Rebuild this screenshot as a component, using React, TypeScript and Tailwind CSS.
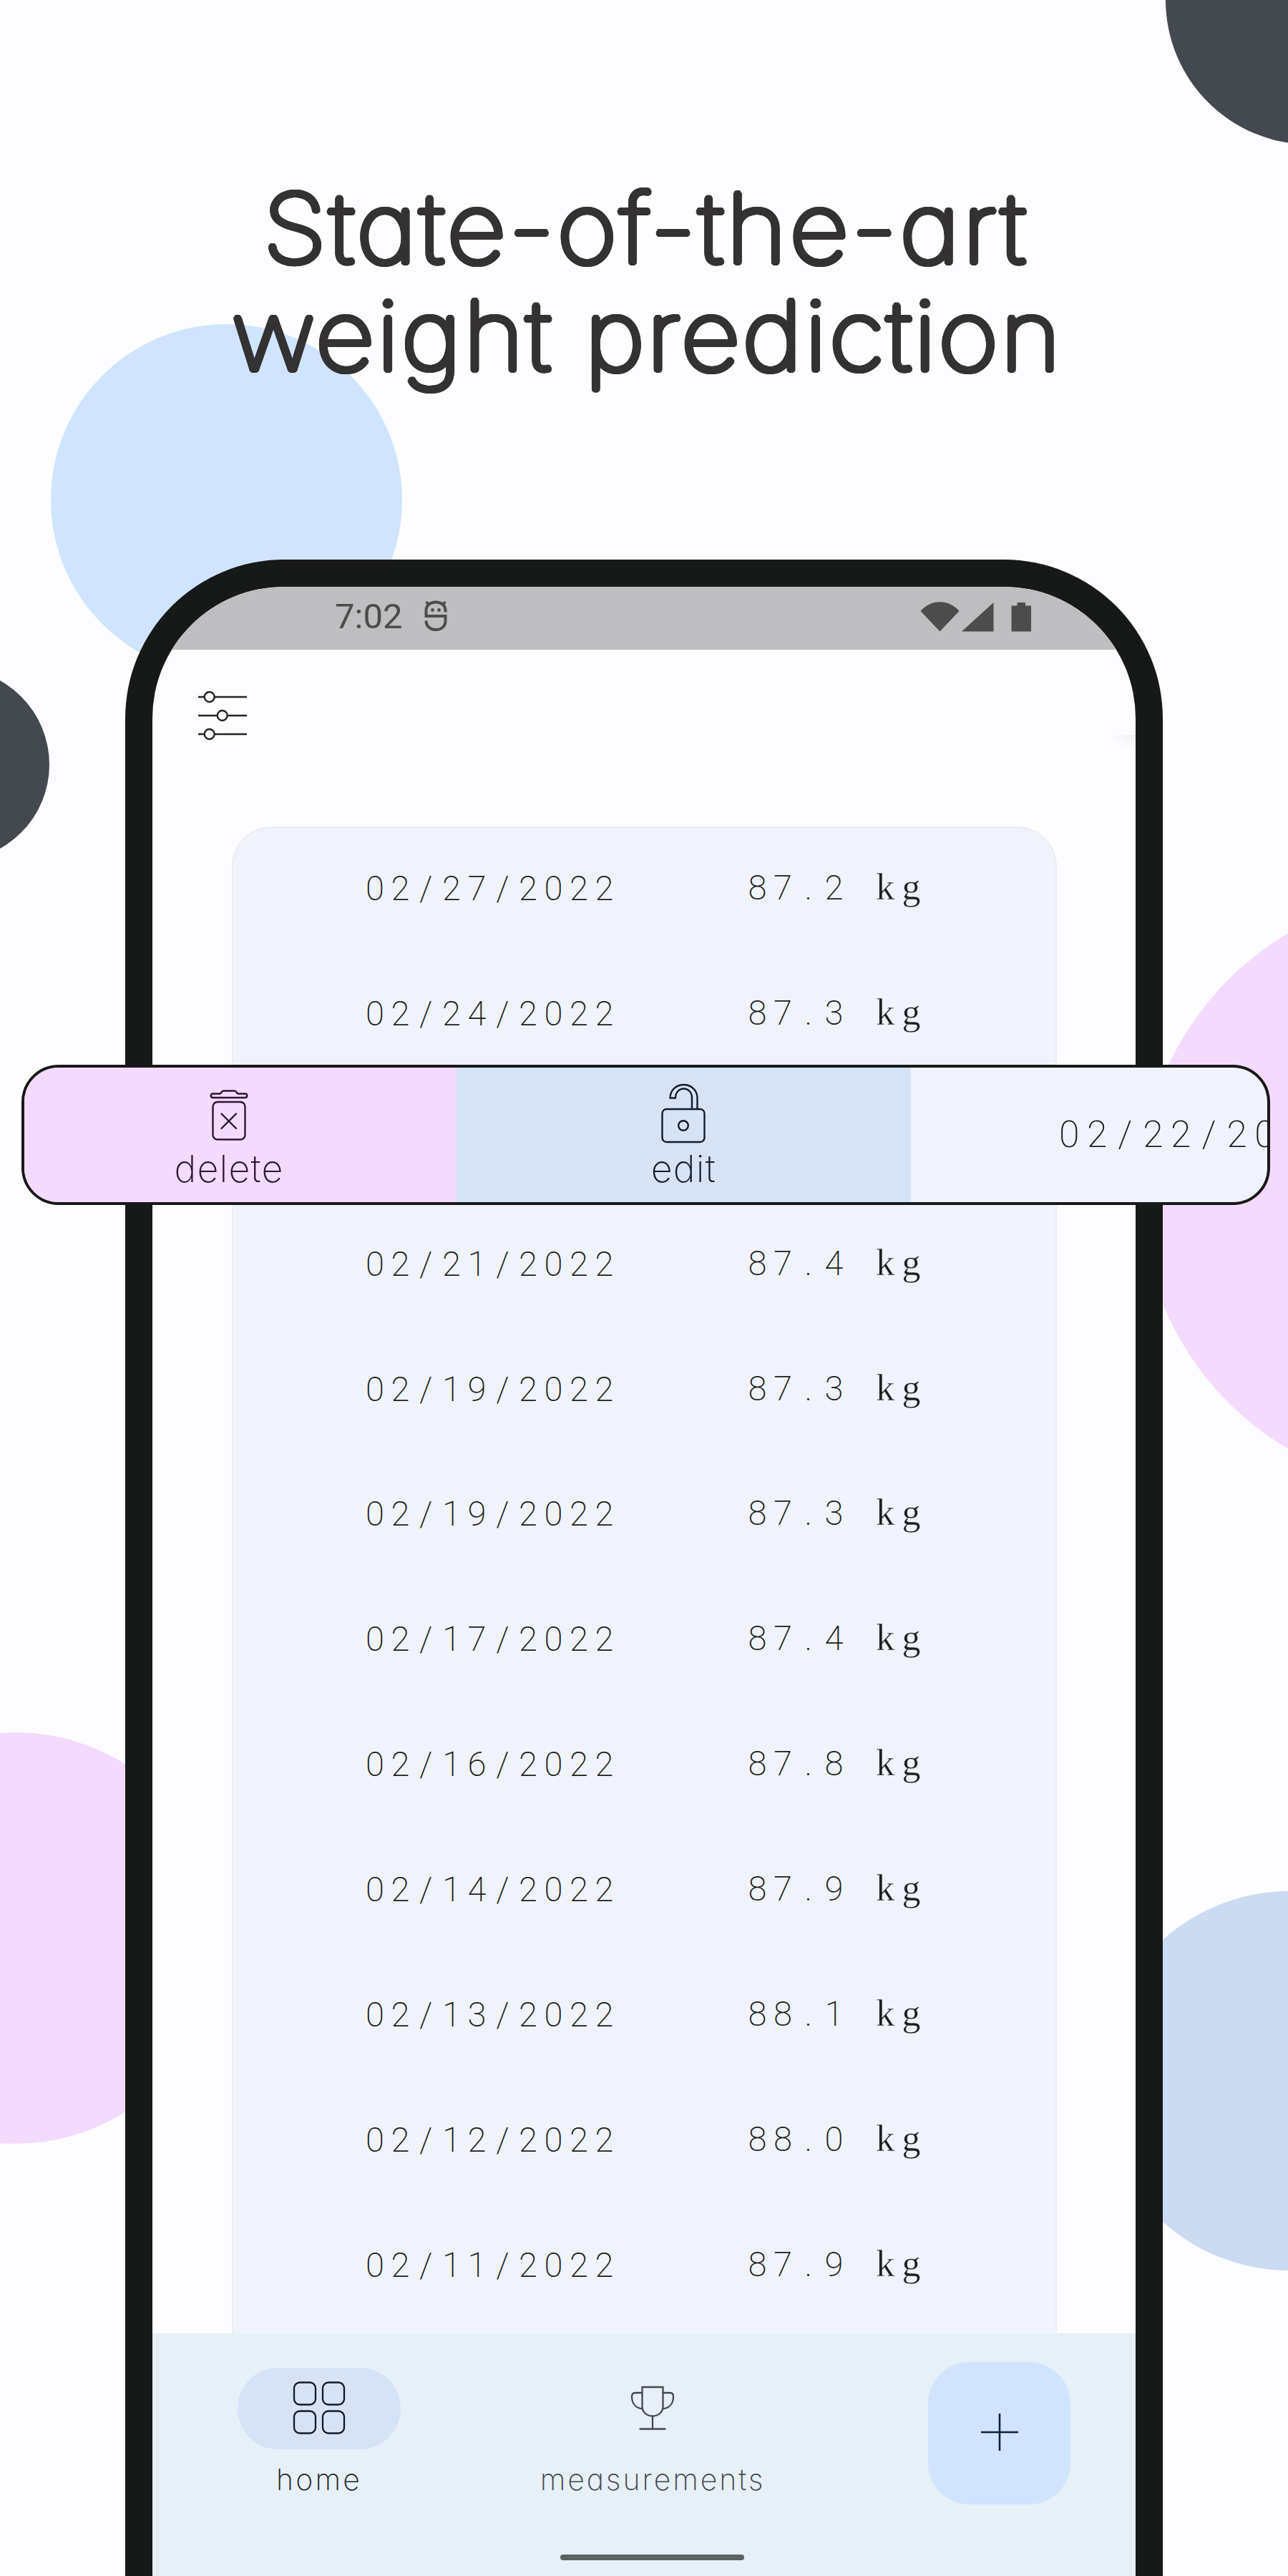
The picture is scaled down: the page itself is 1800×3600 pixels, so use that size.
import type { ReactNode } from "react";

const entries: [string, string][] = [
  ["02/27/2022", "87.2 kg"],
  ["02/24/2022", "87.3 kg"],
  ["02/22/2022", "87.2 kg"],
  ["02/21/2022", "87.4 kg"],
  ["02/19/2022", "87.3 kg"],
  ["02/19/2022", "87.3 kg"],
  ["02/17/2022", "87.4 kg"],
  ["02/16/2022", "87.8 kg"],
  ["02/14/2022", "87.9 kg"],
  ["02/13/2022", "88.1 kg"],
  ["02/12/2022", "88.0 kg"],
  ["02/11/2022", "87.9 kg"],
];

/* Fixed-pitch text: digits share one advance, every other glyph is centred in a cell of the same width. */
function Mono({ text }: { text: string }) {
  return (
    <span className="whitespace-pre font-['Roboto',sans-serif] font-extralight tracking-[0.202em] text-[#1c1e1d]">
      {text.split(/([^0-9])/).map((part, i) => {
        if (/^[0-9]*$/.test(part)) return part;
        const letter = /[a-z]/.test(part);
        return (
          <span key={i} className="mr-[0.202em] inline-flex w-[0.5615em] justify-center leading-none tracking-normal">
            {letter ? (
              <span className="font-['Liberation_Serif',serif] text-[1.1em] font-normal leading-none [-webkit-text-stroke:0.5px_#f0f3fb]">{part}</span>
            ) : (
              part
            )}
          </span>
        );
      })}
    </span>
  );
}

function Backdrop() {
  return (
    <>
      <div className="absolute left-[1629px] top-[-202px] size-[404px] rounded-full bg-[#44484f]" />
      <div className="absolute left-[71px] top-[453px] size-[491px] rounded-full bg-[#d0e4ff]" />
      <div className="absolute left-[-200px] top-[934px] size-[269px] rounded-full bg-[#44484f]" />
      <div className="absolute left-[1594px] top-[1247px] size-[835px] rounded-full bg-[#f3daff]" />
      <div className="absolute left-[-266px] top-[2421px] size-[575px] rounded-full bg-[#f3daff]" />
      <div className="absolute left-[1537px] top-[2643px] size-[530px] rounded-full bg-[#cbdbf1]" />
    </>
  );
}

function StatusBar() {
  return (
    <div className="flex h-[88.5px] shrink-0 items-start bg-[#bebec0] text-[#4c4c4c]">
      <span className="ml-[255px] mt-[14px] w-[94px] font-['Roboto',sans-serif] text-[49px] leading-[56px]">7:02</span>
      <svg className="ml-[31px] mt-[19px]" width="32" height="44" viewBox="0 0 32 44" fill="none" stroke="currentColor" strokeWidth="4">
        <path d="M29.5 16.5V14C29.5 7 24 2.500 16 2.500S2.500 7 2.500 14v8h27v7c0 7-5.500 12-13.500 12S2.500 36 2.500 28.500" />
        <path d="M2.500 2l5 5M29.500 2l-5 5" strokeWidth="3.500" />
        <circle cx="11.500" cy="13.500" r="2.400" fill="currentColor" stroke="none" />
        <circle cx="20.500" cy="13.500" r="2.400" fill="currentColor" stroke="none" />
      </svg>
      <svg className="ml-[660px] mt-[21px]" width="158" height="42" viewBox="0 0 158 42" fill="currentColor">
        <path d="M1.500 13C16-4 41-4 55.500 13L28.500 41.500z" />
        <path d="M59 41.500L103.500 1v40.500z" />
        <path d="M128.500 5.500h8V1h11.500v4.500h8v36h-27.500z" />
      </svg>
    </div>
  );
}

function SettingsIcon() {
  return (
    <svg width="70" height="76" viewBox="0 0 70 76" fill="none" stroke="#222423" strokeWidth="2.400">
      <path d="M1 12h8.500M24 12h45M1 38h26.500M42 38h27M1 64h8.500M24 64h45" />
      <circle cx="16.700" cy="12" r="7" />
      <circle cx="34.700" cy="38" r="7" />
      <circle cx="16.700" cy="64" r="7" />
    </svg>
  );
}

function TrashIcon() {
  return (
    <svg width="64" height="100" viewBox="0 0 64 100" fill="none" stroke="#2b1438" strokeWidth="2.400" strokeLinecap="round" strokeLinejoin="round">
      <path d="M9 21.500h10c2.500 0 2.500-4 5-4h16c2.500 0 2.500 4 5 4h10a2.800 2.800 0 0 1 0 5.500H9a2.800 2.800 0 0 1 0-5.500z" />
      <rect x="9.500" y="33" width="45" height="52.500" rx="6.500" />
      <path d="M21.500 49.500l20.500 20.500M42 49.500L21.500 70" />
    </svg>
  );
}

function LockIcon() {
  return (
    <svg width="64" height="100" viewBox="0 0 64 100" fill="none" stroke="#101c2b" strokeWidth="2.400" strokeLinejoin="round">
      <rect x="2.500" y="43" width="59" height="46" rx="6" />
      <circle cx="32" cy="66" r="6.800" />
      <path d="M51.500 43V27.500C51.500 16.500 43 9 32.500 9S13.500 16.500 13.500 27.500h7.500C21 19.500 26 14.500 32.500 14.500S44 19.500 44 27.500V43" />
    </svg>
  );
}

function SwipeAction({ label, className, children }: { label: string; className: string; children: ReactNode }) {
  return (
    <div className={`flex shrink-0 flex-col items-center gap-[1.500px] pt-[15px] ${className}`}>
      {children}
      <span className="font-['Inter',sans-serif] text-[52px] font-extralight leading-[52px] tracking-[1.2px]">{label}</span>
    </div>
  );
}

function SwipedRow() {
  return (
    <div className="absolute left-[29.5px] top-[1487.500px] flex h-[196.500px] w-[1745px] overflow-hidden rounded-[52px] border-4 border-[#171918] bg-[#f0f3fb]">
      <SwipeAction label="delete" className="w-[604px] bg-[#f3daff] pr-[31px] text-[#2b1438]">
        <TrashIcon />
      </SwipeAction>
      <SwipeAction label="edit" className="w-[635.500px] bg-[#d6e3f6] text-[#101c2b]">
        <LockIcon />
      </SwipeAction>
      <div className="shrink-0 pl-[207px] text-[51.700px] leading-[183px]">
        <Mono text="02/22/2022" />
      </div>
    </div>
  );
}

function NavBar() {
  return (
    <nav className="flex h-[339px] shrink-0 flex-col bg-[#e7eff7] font-['Inter',sans-serif] text-[41px] font-extralight leading-[48px] tracking-[3.200px]">
      <div className="flex h-[309px] items-start">
        <div className="ml-[119px] mt-[48px] flex w-[228px] flex-col items-center text-[#222423]">
          <div className="flex h-[114px] w-full items-center justify-center rounded-full bg-[#d6e3f6]">
            <svg className="mb-[2px]" width="76" height="76" viewBox="0 0 76 76" fill="none" stroke="#101c2b" strokeWidth="2.300">
              <rect x="3" y="2.500" width="30" height="31" rx="8" />
              <rect x="43" y="2.500" width="30" height="31" rx="8" />
              <rect x="3" y="42.500" width="30" height="31" rx="8" />
              <rect x="43" y="42.500" width="30" height="31" rx="8" />
            </svg>
          </div>
          <span className="mt-[17.500px]">home</span>
        </div>
        <div className="ml-[182px] mt-[48px] flex w-[340px] flex-col items-center text-[#44474e]">
          <div className="flex h-[114px] items-center pb-[3px]">
            <svg width="64" height="64" viewBox="0 0 64 64" fill="none" stroke="currentColor" strokeWidth="2.300" strokeLinecap="round">
              <path d="M17.500 3h29v27C46.500 38 40 43.500 32 43.500S17.500 38 17.500 30z" />
              <path d="M17.500 11H7.500C4.500 11 3 12.500 3 16c0 10 5.500 16.500 15 17.300M46.500 11h10c3 0 4.500 1.500 4.500 5 0 10-5.500 16.500-15 17.300M32 43.500V61.500M14.500 61.500h35" />
            </svg>
          </div>
          <span className="mt-[17.500px] tracking-[2.900px] [font-feature-settings:'cv11']">measurements</span>
        </div>
        <button className="ml-[215px] mt-[39.500px] flex size-[199px] items-center justify-center rounded-[58px] bg-[#d0e4ff]">
          <svg className="mb-[2px]" width="54" height="54" viewBox="0 0 54 54" stroke="#0b2236" strokeWidth="2.600">
            <path d="M27 1v52M1 27h52" />
          </svg>
        </button>
      </div>
      <div className="ml-[570px] h-[8px] w-[257px] rounded-full bg-[#5d6262]" />
    </nav>
  );
}

export default function App() {
  return (
    <main className="relative h-[3600px] w-[1800px] overflow-hidden bg-[#fdfdff]">
      <Backdrop />
      <div className="relative flex h-full flex-col">
        <h1 className="h-[781.500px] shrink-0 whitespace-nowrap pt-[244px] font-['Inter',sans-serif] text-[133px] font-thin leading-[150px] text-[#343233] [font-feature-settings:'cv11'] [text-shadow:4px_0_#343233,3.7px_1.5px_#343233,2.8px_2.8px_#343233,1.5px_3.7px_#343233,0_4px_#343233,-1.5px_3.7px_#343233,-2.8px_2.8px_#343233,-3.7px_1.5px_#343233,-4px_0_#343233,-3.7px_-1.5px_#343233,-2.8px_-2.8px_#343233,-1.5px_-3.7px_#343233,0_-4px_#343233,1.5px_-3.7px_#343233,2.8px_-2.8px_#343233,3.7px_-1.5px_#343233,2px_0_#343233,-2px_0_#343233,0_2px_#343233,0_-2px_#343233]">
          <span className="ml-[368px] block w-[1100px] origin-left scale-x-[1.08] tracking-[4.100px]">State-of-the-art</span>
          <span className="ml-[324px] block w-[1100px] origin-left scale-x-[1.08] tracking-[3.200px]">weight prediction</span>
        </h1>
        <section className="ml-[175px] flex w-[1450px] flex-1 flex-col overflow-hidden rounded-t-[222px] border-x-[38px] border-t-[38px] border-[#171918] bg-[#fdfdff]">
          <StatusBar />
          <header className="flex h-[246.500px] shrink-0 items-start justify-between pl-[63px] pt-[54px]">
            <SettingsIcon />
            <div className="mt-[65px] h-[20px] w-[36px] bg-[radial-gradient(ellipse_at_top_right,#f0f0f2,#fdfdff_70%)]" />
          </header>
          <div className="mx-[110.500px] min-h-0 flex-1 overflow-hidden rounded-t-[56px] border-x-2 border-t-2 border-[#ececf1] bg-[#f0f3fb]">
            {entries.map(([date, weight], i) => (
              <div key={i} className="relative -top-[3px] flex h-[174.900px] items-center pl-[185.500px] text-[47.200px] leading-[174px]">
                <span className="w-[534.500px]">
                  <Mono text={date} />
                </span>
                <Mono text={weight} />
              </div>
            ))}
          </div>
          <NavBar />
        </section>
      </div>
      <SwipedRow />
    </main>
  );
}
